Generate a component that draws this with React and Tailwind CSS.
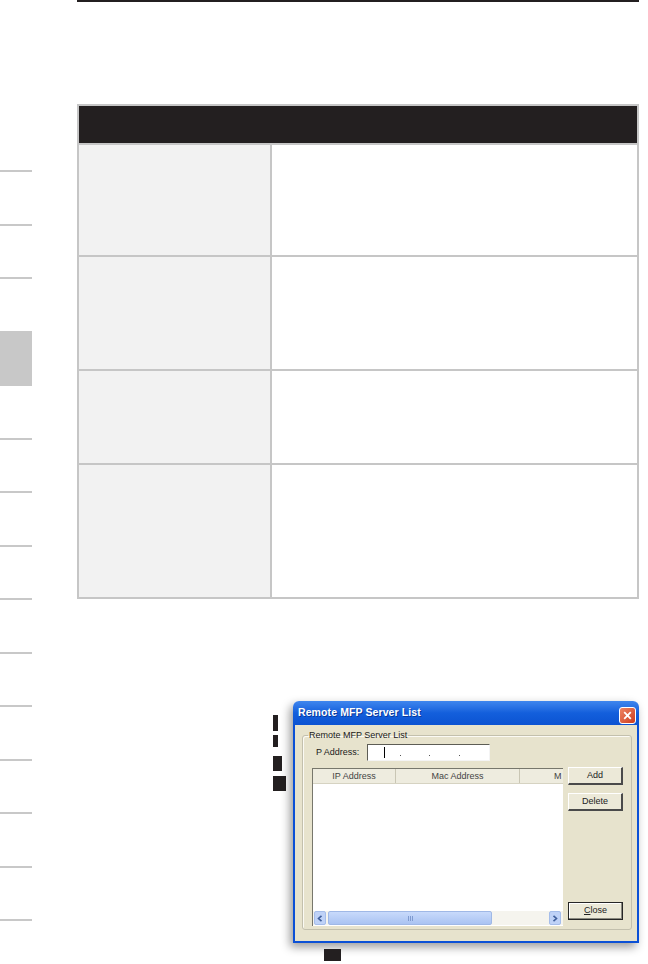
import React from 'react';
import clsx from 'clsx';

const tabs = Array.from({ length: 15 }, (_, i) => i);

const rows = [
  { h: 'h-[112px]', last: false },
  { h: 'h-[114px]', last: false },
  { h: 'h-[94px]', last: false },
  { h: 'h-[132px]', last: true },
];

const xpButton =
  'w-[55px] h-[18px] flex items-center justify-center text-[9px] text-[#222] bg-[#ece9d8] border-t border-l border-white border-r-2 border-b-2 border-r-[#4a4a4a] border-b-[#4a4a4a]';

function Chevron({ dir }) {
  return (
    <svg width="6" height="7" viewBox="0 0 6 7">
      <path
        d={dir === 'left' ? 'M4.5 0.8L1.5 3.5L4.5 6.2' : 'M1.5 0.8L4.5 3.5L1.5 6.2'}
        fill="none"
        stroke="#3f5f9c"
        strokeWidth="1.6"
      />
    </svg>
  );
}

function ServerListDialog() {
  return (
    <div className="w-[346px] rounded-t-[6px] shadow-[-3px_4px_10px_rgba(0,0,0,0.4)] font-['Liberation_Sans',Arial,sans-serif]">
      {/* title bar */}
      <div className="h-[24px] rounded-t-[6px] bg-linear-to-b from-[#3f86ee] via-[#135fdc] to-[#0c53d2] flex items-center justify-between pl-[5px] pr-[3px]">
        <span className="text-[10.5px] font-bold text-white tracking-[0.1px] [text-shadow:1px_1px_0_#0a3a9a]">
          Remote MFP Server List
        </span>
        <div className="mt-[4px] w-[17px] h-[17px] rounded-[3px] border border-white bg-linear-to-br from-[#ee8463] to-[#cc3a1b] flex items-center justify-center">
          <svg width="9" height="9" viewBox="0 0 9 9">
            <path d="M1.2 1.2L7.8 7.8M7.8 1.2L1.2 7.8" stroke="white" strokeWidth="1.8" />
          </svg>
        </div>
      </div>

      {/* body */}
      <div className="bg-[#e7e3cd] border-x-2 border-b-2 border-[#0b50d6] pl-[7px] pr-[5px] pt-[5px] pb-[11px]">
        <fieldset className="w-[330px] border border-[#c3c0ad] rounded-[3px] shadow-[inset_1px_1px_0_#fbfaf4] pl-[6px] pr-[8px] pb-[3px]">
          <legend className="-ml-[1px] px-[1px] text-[9px] leading-[11px] text-[#1a1a1a]">
            Remote MFP Server List
          </legend>

          {/* ip address input */}
          <div className="mt-[3px] ml-[7px] h-[17px] flex items-center">
            <span className="text-[9px] text-[#1a1a1a]">P Address:</span>
            <div className="ml-[8px] w-[123px] h-[17px] bg-white border border-[#5d5d55] border-r-[#f4f4f4] border-b-[#f4f4f4] flex items-center">
              <div className="ml-[16px] w-px h-[11px] bg-black" />
              <div className="ml-[15px] self-end mb-[4px] w-px h-px bg-[#555]" />
              <div className="ml-[28px] self-end mb-[4px] w-px h-px bg-[#555]" />
              <div className="ml-[29px] self-end mb-[4px] w-px h-px bg-[#555]" />
            </div>
          </div>

          {/* list + buttons */}
          <div className="mt-[6px] ml-[3px] flex items-start">
            <div className="mt-[1px] w-[251px] h-[158px] bg-white border-t border-l border-[#77776c] flex flex-col overflow-hidden">
              <div className="h-[15px] flex bg-[#eeecdf] border-b border-[#d6d3c2] text-[9px] text-[#444] leading-[14px]">
                <div className="w-[83px] shrink-0 text-center border-r border-[#c9c6b4]">IP Address</div>
                <div className="w-[124px] shrink-0 text-center border-r border-[#c9c6b4]">Mac Address</div>
                <div className="flex-1 pl-[34px]">M</div>
              </div>
              <div className="flex-1" />
              <div className="h-[14px] mb-[1px] flex items-stretch bg-[#f5f4ee]">
                <div className="ml-[1px] w-[12px] rounded-[2px] border border-[#a5bdea] bg-[#bfd2f7] flex items-center justify-center">
                  <Chevron dir="left" />
                </div>
                <div className="ml-[2px] w-[164px] rounded-[2px] border border-[#9fb8e6] bg-linear-to-b from-[#c8dafb] to-[#aac3f2] flex items-center justify-center gap-[1px]">
                  <div className="w-px h-[5px] bg-[#7f9bd0]" />
                  <div className="w-px h-[5px] bg-[#7f9bd0]" />
                  <div className="w-px h-[5px] bg-[#7f9bd0]" />
                </div>
                <div className="flex-1" />
                <div className="mr-[2px] w-[12px] rounded-[2px] border border-[#a5bdea] bg-[#bfd2f7] flex items-center justify-center">
                  <Chevron dir="right" />
                </div>
              </div>
            </div>

            <div className="ml-[5px] flex flex-col">
              <div className={xpButton}>Add</div>
              <div className={clsx(xpButton, 'mt-[8px]')}>Delete</div>
              <div className="mt-[91px] w-[55px] h-[18px] flex items-center justify-center text-[9px] text-[#222] bg-[#ece9d8] border border-[#262626] shadow-[inset_-1px_-1px_0_#8a8a80,inset_1px_1px_0_#ffffff]">
                <span className="underline">C</span>lose
              </div>
            </div>
          </div>
        </fieldset>
      </div>
    </div>
  );
}

export default function App() {
  return (
    <div className="w-[648px] h-[964px] bg-white overflow-hidden flex">
      {/* chapter tabs */}
      <div className="w-[32px] shrink-0 pt-[170px] flex flex-col">
        {tabs.map((i) => (
          <div
            key={i}
            className={clsx('h-[53.5px] shrink-0 border-t-2 border-[#c8c8c8]', i === 3 && 'bg-[#c8c8c8]')}
          />
        ))}
      </div>

      <div className="ml-[45px] w-[562px] flex flex-col">
        <div className="h-[2px] bg-[#231f20]" />

        {/* table */}
        <div className="mt-[102px] border-2 border-[#c6c6c6]">
          <div className="h-[39px] bg-[#231f20] border-b-2 border-[#c6c6c6]" />
          {rows.map((r, i) => (
            <div key={i} className={clsx('flex', r.h, !r.last && 'border-b-2 border-[#c6c6c6]')}>
              <div className="w-[193px] bg-[#f2f2f2] border-r-2 border-[#c6c6c6]" />
              <div className="flex-1 bg-white" />
            </div>
          ))}
        </div>

        {/* screenshot with callouts */}
        <div className="mt-[102px] ml-[196px] flex items-start">
          <div className="w-[13px] pt-[14px] flex flex-col items-start">
            <div className="w-[5px] h-[16px] bg-[#231f20]" />
            <div className="mt-[4px] w-[5px] h-[12px] bg-[#231f20]" />
            <div className="mt-[9px] w-[9px] h-[15px] bg-[#231f20]" />
            <div className="mt-[5px] w-[13px] h-[15px] bg-[#231f20]" />
          </div>
          <div className="ml-[7px]">
            <ServerListDialog />
          </div>
        </div>
        <div className="mt-[6px] ml-[247px] w-[17px] h-[12px] bg-[#231f20]" />
      </div>
    </div>
  );
}
